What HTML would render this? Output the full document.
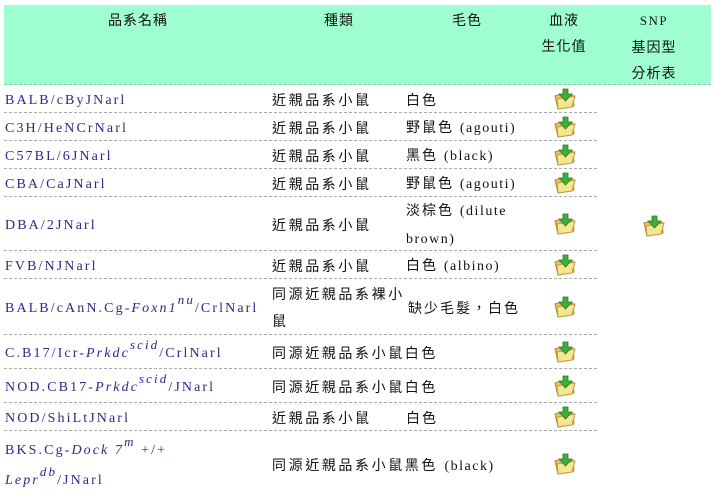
<!DOCTYPE html>
<html><head><meta charset="utf-8"><style>
body{margin:0;background:#fff;width:715px;height:496px;overflow:hidden;position:relative;font-family:"Liberation Sans","Noto Sans CJK TC",sans-serif;font-size:14px;color:#111}
.hd{position:absolute;left:4px;top:5px;width:707px;height:79px;background:#9fffd0;border-bottom:1px dashed #8ccaa8}
.h{position:absolute;top:7px;text-align:center;line-height:26px;letter-spacing:1px;transform:translateX(-50%)}
.r{position:absolute;left:4px;width:593px;border-bottom:1px dashed #aaa}
.cell{position:absolute;top:3px;bottom:0;display:flex;align-items:center;line-height:27px}
.n{left:1px;color:#2a2a8a;font-family:"Liberation Serif",serif;font-size:14px;letter-spacing:2.1px;white-space:nowrap}
.c{left:268px;letter-spacing:2.6px;white-space:nowrap}
.cs{left:402px;width:126px;letter-spacing:2px}
.cs span,.sp{font-family:"Liberation Serif",serif;letter-spacing:1.5px}
.i{left:549px;top:0}
i{font-style:italic}
sup{font-size:13px;vertical-align:8px;line-height:0;font-style:italic}
svg{display:block}
</style></head><body>
<svg width="0" height="0" style="position:absolute"><defs>
<symbol id="f" viewBox="0 0 24 22">
<path d="M2 8 L9 6 L11 8 L20 7 L21 18 L5 21 Z" fill="#e8c560" stroke="#b08a30" stroke-width="1"/>
<path d="M4 11 L22 8 L19 19 L5 21 Z" fill="#f8e590" stroke="#c09a40" stroke-width="1"/>
<path d="M10 1 H15 V6 H19 L12.5 13 L6 6 H10 Z" fill="#3fae3a" stroke="#2a7a2a" stroke-width="0.8"/>
</symbol></defs></svg>
<div class="hd"></div>
<div class="h" style="left:138px">品系名稱</div>
<div class="h" style="left:339px">種類</div>
<div class="h" style="left:467px">毛色</div>
<div class="h" style="left:564px">血液<br>生化值</div>
<div class="h" style="left:654px"><span class="sp" style="font-size:13px">SNP</span><br>基因型<br>分析表</div>

<div class="r" style="top:85px;height:27px"><div class="cell n">BALB/cByJNarl</div><div class="cell c">近親品系小鼠</div><div class="cell cs">白色</div><div class="cell i"><svg width="24" height="22"><use href="#f"/></svg></div></div>
<div class="r" style="top:113px;height:27px"><div class="cell n">C3H/HeNCrNarl</div><div class="cell c">近親品系小鼠</div><div class="cell cs"><div>野鼠色 <span>(agouti)</span></div></div><div class="cell i"><svg width="24" height="22"><use href="#f"/></svg></div></div>
<div class="r" style="top:141px;height:27px"><div class="cell n">C57BL/6JNarl</div><div class="cell c">近親品系小鼠</div><div class="cell cs"><div>黑色 <span>(black)</span></div></div><div class="cell i"><svg width="24" height="22"><use href="#f"/></svg></div></div>
<div class="r" style="top:169px;height:27px"><div class="cell n">CBA/CaJNarl</div><div class="cell c">近親品系小鼠</div><div class="cell cs"><div>野鼠色 <span>(agouti)</span></div></div><div class="cell i"><svg width="24" height="22"><use href="#f"/></svg></div></div>
<div class="r" style="top:197px;height:53px"><div class="cell n">DBA/2JNarl</div><div class="cell c">近親品系小鼠</div><div class="cell cs"><div>淡棕色 <span>(dilute<br>brown)</span></div></div><div class="cell i"><svg width="24" height="22"><use href="#f"/></svg></div></div>
<div class="r" style="top:251px;height:27px"><div class="cell n">FVB/NJNarl</div><div class="cell c">近親品系小鼠</div><div class="cell cs"><div>白色 <span>(albino)</span></div></div><div class="cell i"><svg width="24" height="22"><use href="#f"/></svg></div></div>
<div class="r" style="top:279px;height:55px"><div class="cell n"><div>BALB/cAnN.Cg-<i>Foxn1</i><sup>nu</sup>/CrlNarl</div></div><div class="cell c" style="width:136px;white-space:normal"><div>同源近親品系裸小鼠</div></div><div class="cell cs" style="left:404px;width:160px">缺少毛髮，白色</div><div class="cell i"><svg width="24" height="22"><use href="#f"/></svg></div></div>
<div class="r" style="top:335px;height:33px"><div class="cell n"><div>C.B17/Icr-<i>Prkdc</i><sup>scid</sup>/CrlNarl</div></div><div class="cell c">同源近親品系小鼠白色</div><div class="cell i"><svg width="24" height="22"><use href="#f"/></svg></div></div>
<div class="r" style="top:369px;height:33px"><div class="cell n"><div>NOD.CB17-<i>Prkdc</i><sup>scid</sup>/JNarl</div></div><div class="cell c">同源近親品系小鼠白色</div><div class="cell i"><svg width="24" height="22"><use href="#f"/></svg></div></div>
<div class="r" style="top:403px;height:27px"><div class="cell n">NOD/ShiLtJNarl</div><div class="cell c">近親品系小鼠</div><div class="cell cs">白色</div><div class="cell i"><svg width="24" height="22"><use href="#f"/></svg></div></div>
<div class="r" style="top:431px;height:66px;border-bottom:none"><div class="cell n" style="line-height:30px"><div>BKS.Cg-<i>Dock 7</i><sup>m</sup> +/+<br><i>Lepr</i><sup>db</sup>/JNarl</div></div><div class="cell c"><div>同源近親品系小鼠黑色 <span class="sp">(black)</span></div></div><div class="cell i"><svg width="24" height="22"><use href="#f"/></svg></div></div>

<div style="position:absolute;left:642px;top:215px"><svg width="24" height="22"><use href="#f"/></svg></div>
</body></html>
